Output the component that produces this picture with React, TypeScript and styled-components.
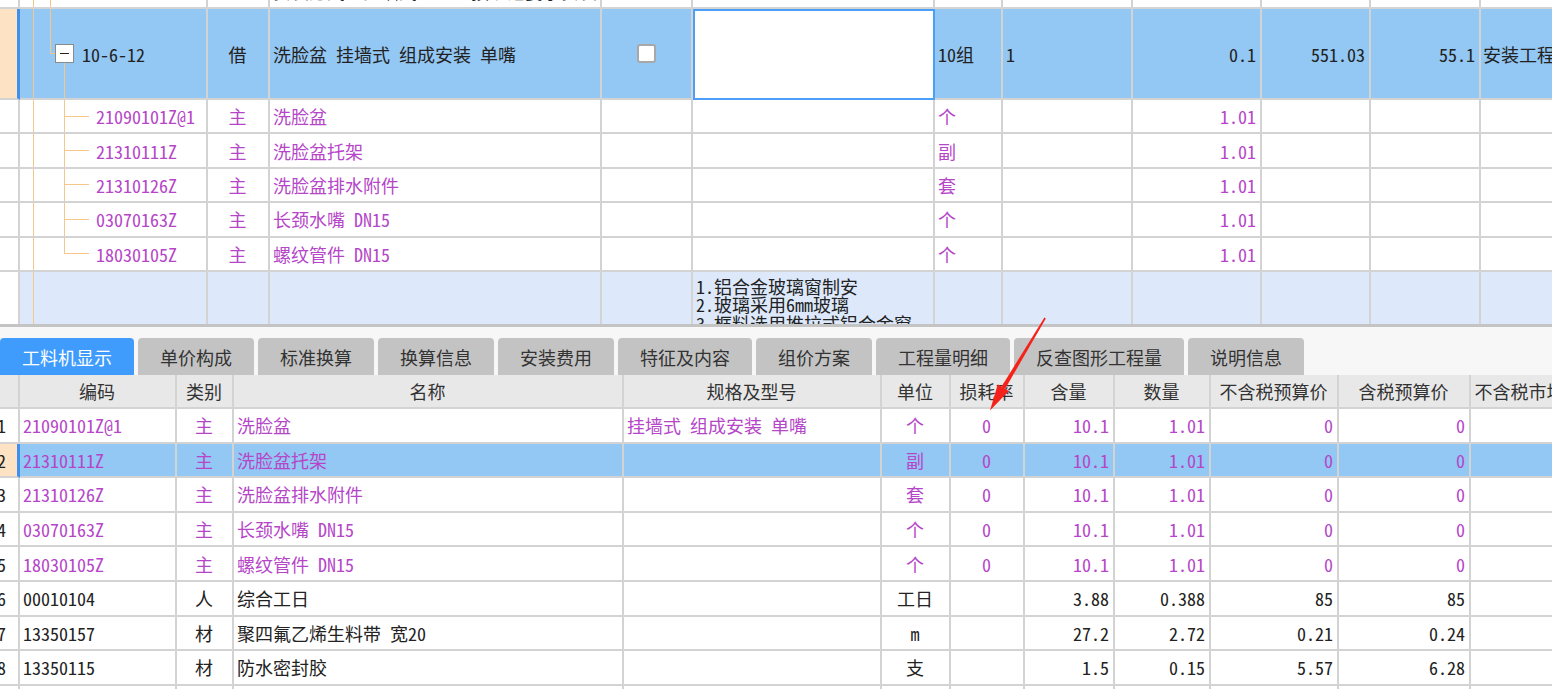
import React from 'react'
import styled, { createGlobalStyle } from 'styled-components'

const GRID = '#d3d3d3'
const INK = '#222'
const PURPLE = '#b546c8'
const SELECTED = '#93c7f4'
const DESC = '#dde9fb'
const PEACH = '#fde3c3'
const BAR = '#3f8fef'
const TREE = '#f6c68a'

const TOP_COLS = '20px 188px 62px 332px 91px 242px 68px 130px 129px 109px 110px 120px'
const BOTTOM_COLS = '20px 157px 57px 390px 258px 69px 74px 90px 96px 128px 132px 118px'

const GlobalStyle = createGlobalStyle`
  html, body {
    margin: 0;
    padding: 0;
    background: #fff;
  }
  body {
    font-family: "Noto Sans Mono CJK SC", "Noto Sans CJK SC", sans-serif;
    font-size: 18px;
    overflow: hidden;
  }
`

type Align = 'left' | 'center' | 'right'

interface ChildItem {
  code: string
  name: string
  unit: string
}

interface MaterialRow {
  no: string
  code: string
  kind: string
  name: string
  spec: string
  unit: string
  loss: string
  content: string
  qty: string
  price: string
  taxPrice: string
  main: boolean
}

const children: ChildItem[] = [
  { code: '21090101Z@1', name: '洗脸盆', unit: '个' },
  { code: '21310111Z', name: '洗脸盆托架', unit: '副' },
  { code: '21310126Z', name: '洗脸盆排水附件', unit: '套' },
  { code: '03070163Z', name: '长颈水嘴 DN15', unit: '个' },
  { code: '18030105Z', name: '螺纹管件 DN15', unit: '个' },
]

const materials: MaterialRow[] = [
  { no: '1', code: '21090101Z@1', kind: '主', name: '洗脸盆', spec: '挂墙式 组成安装 单嘴', unit: '个', loss: '0', content: '10.1', qty: '1.01', price: '0', taxPrice: '0', main: true },
  { no: '2', code: '21310111Z', kind: '主', name: '洗脸盆托架', spec: '', unit: '副', loss: '0', content: '10.1', qty: '1.01', price: '0', taxPrice: '0', main: true },
  { no: '3', code: '21310126Z', kind: '主', name: '洗脸盆排水附件', spec: '', unit: '套', loss: '0', content: '10.1', qty: '1.01', price: '0', taxPrice: '0', main: true },
  { no: '4', code: '03070163Z', kind: '主', name: '长颈水嘴 DN15', spec: '', unit: '个', loss: '0', content: '10.1', qty: '1.01', price: '0', taxPrice: '0', main: true },
  { no: '5', code: '18030105Z', kind: '主', name: '螺纹管件 DN15', spec: '', unit: '个', loss: '0', content: '10.1', qty: '1.01', price: '0', taxPrice: '0', main: true },
  { no: '6', code: '00010104', kind: '人', name: '综合工日', spec: '', unit: '工日', loss: '', content: '3.88', qty: '0.388', price: '85', taxPrice: '85', main: false },
  { no: '7', code: '13350157', kind: '材', name: '聚四氟乙烯生料带 宽20', spec: '', unit: 'm', loss: '', content: '27.2', qty: '2.72', price: '0.21', taxPrice: '0.24', main: false },
  { no: '8', code: '13350115', kind: '材', name: '防水密封胶', spec: '', unit: '支', loss: '', content: '1.5', qty: '0.15', price: '5.57', taxPrice: '6.28', main: false },
  { no: '9', code: '', kind: '', name: '', spec: '', unit: '', loss: '', content: '', qty: '', price: '', taxPrice: '', main: false },
]

const headers = ['', '编码', '类别', '名称', '规格及型号', '单位', '损耗率', '含量', '数量', '不含税预算价', '含税预算价', '不含税市场价']

const tabs = ['工料机显示', '单价构成', '标准换算', '换算信息', '安装费用', '特征及内容', '组价方案', '工程量明细', '反查图形工程量', '说明信息']

const ArrowMark: React.FC = () => (
  <StyledArrow width="75" height="105" viewBox="0 0 75 105">
    <polygon points="64.4,5.4 65.8,6.4 25.2,76.8 21.6,74.4" fill="#f5221b" />
    <polygon points="28.8,79 10,98.5 17.8,72.2" fill="#f5221b" />
  </StyledArrow>
)

const TopGrid: React.FC = () => (
  <StyledTopPane>
    <StyledRow $cols={TOP_COLS} $height={34.5} $offset={-25.5}>
      <StyledRowHead />
      <StyledTreeCell>
        <StyledGuide $w={13} />
        <StyledGuide $w={16} $line />
        <StyledGuide $w={20} $line />
      </StyledTreeCell>
      <StyledCell />
      <StyledCell>安装方式：挂墙式、、、、 按规范要求安装</StyledCell>
      <StyledCell />
      <StyledCell />
      <StyledCell />
      <StyledCell />
      <StyledCell />
      <StyledCell />
      <StyledCell />
      <StyledCell />
    </StyledRow>

    <StyledRow $cols={TOP_COLS} $height={91} $bg={SELECTED}>
      <StyledRowHead $selected />
      <StyledTreeCell>
        <StyledGuide $w={13} />
        <StyledGuide $w={16} $line />
        <StyledElbow>
          <StyledElbowTop />
          <StyledElbowBottom />
        </StyledElbow>
        <StyledBoxColumn>
          <StyledBoxSpace />
          <StyledMinusBox>
            <StyledMinus />
          </StyledMinusBox>
          <StyledBoxSpace $line />
        </StyledBoxColumn>
        <StyledTreeText $gap={8}>10-6-12</StyledTreeText>
      </StyledTreeCell>
      <StyledCell $align="center">借</StyledCell>
      <StyledCell>洗脸盆 挂墙式 组成安装 单嘴</StyledCell>
      <StyledCell $align="center">
        <StyledCheckbox />
      </StyledCell>
      <StyledEditCell />
      <StyledCell>10组</StyledCell>
      <StyledCell>1</StyledCell>
      <StyledCell $align="right">0.1</StyledCell>
      <StyledCell $align="right">551.03</StyledCell>
      <StyledCell $align="right">55.1</StyledCell>
      <StyledCell $tight>安装工程</StyledCell>
    </StyledRow>

    {children.map((item, i) => (
      <StyledRow key={item.code} $cols={TOP_COLS} $height={34.4}>
        <StyledRowHead />
        <StyledTreeCell $purple>
          <StyledGuide $w={13} />
          <StyledGuide $w={30} $line />
          <StyledBranch>
            <StyledBranchTop />
            <StyledBranchBottom $last={i === children.length - 1} />
          </StyledBranch>
          <StyledTreeText $gap={7}>{item.code}</StyledTreeText>
        </StyledTreeCell>
        <StyledCell $align="center" $purple>主</StyledCell>
        <StyledCell $purple>{item.name}</StyledCell>
        <StyledCell />
        <StyledCell />
        <StyledCell $purple>{item.unit}</StyledCell>
        <StyledCell />
        <StyledCell $align="right" $purple>1.01</StyledCell>
        <StyledCell />
        <StyledCell />
        <StyledCell />
      </StyledRow>
    ))}

    <StyledRow $cols={TOP_COLS} $height={70} $bg={DESC}>
      <StyledRowHead />
      <StyledTreeCell>
        <StyledGuide $w={13} />
        <StyledGuide $w={16} $line />
      </StyledTreeCell>
      <StyledCell />
      <StyledCell />
      <StyledCell />
      <StyledDescCell>
        {'1.铝合金玻璃窗制安\n2.玻璃采用6mm玻璃\n3.框料选用推拉式铝合金窗'}
      </StyledDescCell>
      <StyledCell />
      <StyledCell />
      <StyledCell />
      <StyledCell />
      <StyledCell />
      <StyledCell />
    </StyledRow>
  </StyledTopPane>
)

const BottomGrid: React.FC = () => (
  <StyledBottomPane>
    <StyledTabBar>
      {tabs.map((tab, i) => (
        <StyledTab key={tab} $active={i === 0}>
          {tab}
        </StyledTab>
      ))}
    </StyledTabBar>
    <StyledRow $cols={BOTTOM_COLS} $height={34} $bg="#e8e8e8">
      {headers.map((h, i) => (
        <StyledHeadCell key={i}>{h}</StyledHeadCell>
      ))}
    </StyledRow>
    {materials.map((m) => {
      const selected = m.no === '2'
      return (
        <StyledRow key={m.no} $cols={BOTTOM_COLS} $height={34.6} $bg={selected ? SELECTED : '#fff'}>
          <StyledRowHead $selected={selected}>
            <StyledRowNo>{m.no}</StyledRowNo>
          </StyledRowHead>
          <StyledCell $purple={m.main}>{m.code}</StyledCell>
          <StyledCell $align="center" $purple={m.main}>{m.kind}</StyledCell>
          <StyledCell $purple={m.main}>{m.name}</StyledCell>
          <StyledCell $purple={m.main}>{m.spec}</StyledCell>
          <StyledCell $align="center" $purple={m.main}>{m.unit}</StyledCell>
          <StyledCell $align="center" $purple={m.main}>{m.loss}</StyledCell>
          <StyledCell $align="right" $purple={m.main}>{m.content}</StyledCell>
          <StyledCell $align="right" $purple={m.main}>{m.qty}</StyledCell>
          <StyledCell $align="right" $purple={m.main}>{m.price}</StyledCell>
          <StyledCell $align="right" $purple={m.main}>{m.taxPrice}</StyledCell>
          <StyledCell />
        </StyledRow>
      )
    })}
  </StyledBottomPane>
)

const App: React.FC = () => {
  return (
    <>
      <GlobalStyle />
      <StyledApp>
        <TopGrid />
        <BottomGrid />
        <ArrowMark />
      </StyledApp>
    </>
  )
}

const StyledApp = styled.div`
  position: relative;
  width: 1552px;
  height: 689px;
  overflow: hidden;
  background: #fff;
`

const StyledTopPane = styled.div`
  height: 324px;
  overflow: hidden;
  border-bottom: 3px solid #c4c4c4;
`

const StyledBottomPane = styled.div`
  display: flex;
  flex-direction: column;
`

const StyledRow = styled.div<{ $cols: string; $height: number; $bg?: string; $offset?: number }>`
  display: grid;
  grid-template-columns: ${(props) => props.$cols};
  height: ${(props) => props.$height}px;
  margin-top: ${(props) => props.$offset || 0}px;
  background: ${(props) => props.$bg || '#fff'};
  flex-shrink: 0;
`

const StyledCell = styled.div<{ $align?: Align; $purple?: boolean; $tight?: boolean }>`
  box-sizing: border-box;
  display: flex;
  align-items: center;
  justify-content: ${(props) =>
    props.$align === 'center' ? 'center' : props.$align === 'right' ? 'flex-end' : 'flex-start'};
  padding: ${(props) => (props.$tight ? '0 0 0 2px' : '0 4px 0 3px')};
  border-right: 2px solid ${GRID};
  border-bottom: 2px solid ${GRID};
  color: ${(props) => (props.$purple ? PURPLE : INK)};
  line-height: 1;
  white-space: nowrap;
  overflow: hidden;
  min-width: 0;
`

const StyledHeadCell = styled(StyledCell)`
  justify-content: center;
  font-family: "Noto Sans CJK SC", sans-serif;
  color: #333;
`

const StyledRowHead = styled.div<{ $selected?: boolean }>`
  box-sizing: border-box;
  display: flex;
  align-items: center;
  background: ${(props) => (props.$selected ? PEACH : '#fff')};
  border-right: ${(props) => (props.$selected ? `3px solid ${BAR}` : `2px solid ${GRID}`)};
  border-bottom: 2px solid ${GRID};
  overflow: hidden;
  color: ${INK};
`

const StyledRowNo = styled.span`
  margin-left: -3px;
  line-height: 1;
`

const StyledTreeCell = styled(StyledCell)`
  align-items: stretch;
  padding: 0;
`

const StyledGuide = styled.div<{ $w: number; $line?: boolean }>`
  width: ${(props) => props.$w}px;
  flex-shrink: 0;
  border-left: ${(props) => (props.$line ? `1px solid ${TREE}` : 'none')};
`

const StyledElbow = styled.div`
  width: 5px;
  flex-shrink: 0;
  display: flex;
  flex-direction: column;
`

const StyledElbowTop = styled.div`
  flex: 1;
  border-left: 1px solid ${TREE};
  border-bottom: 1px solid ${TREE};
`

const StyledElbowBottom = styled.div`
  flex: 1;
`

const StyledBoxColumn = styled.div`
  width: 19px;
  flex-shrink: 0;
  display: flex;
  flex-direction: column;
`

const StyledBoxSpace = styled.div<{ $line?: boolean }>`
  flex: 1;
  margin-left: 9px;
  border-left: ${(props) => (props.$line ? `1px solid ${TREE}` : 'none')};
`

const StyledMinusBox = styled.div`
  box-sizing: border-box;
  width: 19px;
  height: 19px;
  background: #fff;
  border: 1px solid #8a8a8a;
  display: flex;
  align-items: center;
  justify-content: center;
`

const StyledMinus = styled.span`
  width: 9px;
  height: 1px;
  background: #222;
`

const StyledBranch = styled.div`
  width: 25px;
  flex-shrink: 0;
  display: flex;
  flex-direction: column;
`

const StyledBranchTop = styled.div`
  flex: 1;
  border-left: 1px solid ${TREE};
  border-bottom: 1px solid ${TREE};
`

const StyledBranchBottom = styled.div<{ $last?: boolean }>`
  flex: 1;
  border-left: ${(props) => (props.$last ? 'none' : `1px solid ${TREE}`)};
`

const StyledTreeText = styled.span<{ $gap?: number }>`
  align-self: center;
  margin-left: ${(props) => props.$gap || 9}px;
`

const StyledCheckbox = styled.span`
  box-sizing: border-box;
  width: 19px;
  height: 19px;
  background: #fff;
  border: 2px solid #a8a8a8;
  border-radius: 3px;
`

const StyledEditCell = styled.div`
  box-sizing: border-box;
  background: #fff;
  border: 2px solid #4b9ff8;
`

const StyledDescCell = styled(StyledCell)`
  align-items: flex-start;
  padding-top: 5px;
  line-height: 18.5px;
  white-space: pre-line;
  font-size: 18px;
`

const StyledTabBar = styled.div`
  display: flex;
  gap: 4px;
  height: 48px;
  padding-top: 11px;
  box-sizing: border-box;
  background: #f7f7f7;
`

const StyledTab = styled.div<{ $active?: boolean }>`
  display: flex;
  align-items: center;
  padding: 0 22px;
  border-radius: 4px 4px 0 0;
  font-family: "Noto Sans CJK SC", sans-serif;
  font-size: 18px;
  line-height: 1;
  white-space: nowrap;
  background: ${(props) => (props.$active ? '#409cfc' : '#c3c3c3')};
  color: ${(props) => (props.$active ? '#fff' : '#333')};
`

const StyledArrow = styled.svg`
  position: absolute;
  left: 980px;
  top: 312px;
  pointer-events: none;
`

export default App
